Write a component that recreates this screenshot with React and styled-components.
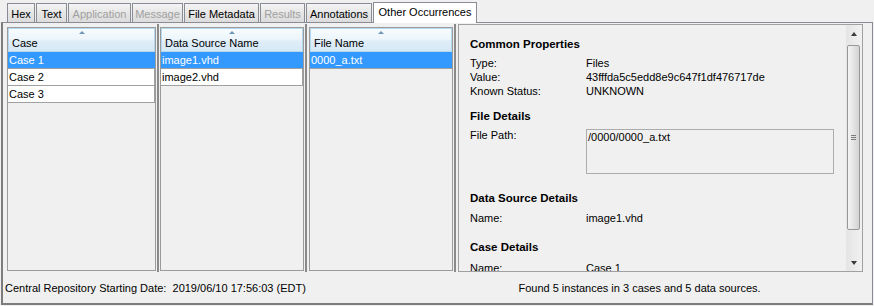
import styled, { createGlobalStyle } from "styled-components";

const GlobalStyle = createGlobalStyle`
  html, body {
    margin: 0;
    padding: 0;
    background: #f0f0f0;
  }
  body {
    font-family: "Liberation Sans", Arial, sans-serif;
    font-size: 11px;
    color: #000;
  }
`;

const Window = styled.div`
  width: 874px;
  height: 306px;
  overflow: hidden;
  background: #f0f0f0;
  display: flex;
  flex-direction: column;
`;

const TabStrip = styled.div`
  height: 22px;
  display: flex;
  align-items: flex-end;
  gap: 1px;
  padding-left: 7px;
  position: relative;
  z-index: 1;
`;

const Tab = styled.div`
  box-sizing: border-box;
  width: ${(p) => p.$w}px;
  height: ${(p) => (p.$active ? 21 : 19)}px;
  margin-bottom: ${(p) => (p.$active ? -1 : 0)}px;
  border: 1px solid #898c95;
  border-bottom: none;
  background: ${(p) =>
    p.$active ? "#ffffff" : "linear-gradient(#f4f4f4, #e6e6e6 50%, #dcdcdc)"};
  color: ${(p) => (p.$disabled ? "#a0a0a0" : "#000")};
  font-size: 11px;
  line-height: 14px;
  padding-top: ${(p) => (p.$active ? 2 : 3)}px;
  text-align: center;
  white-space: nowrap;
`;

const TabPanel = styled.div`
  box-sizing: border-box;
  margin-left: 1px;
  width: 872px;
  height: 283px;
  border: 1px solid #898c95;
  border-left: 2px solid #7d7d7d;
  border-bottom: 2px solid #7d7d7d;
  display: flex;
  flex-direction: column;
`;

const Split = styled.div`
  display: flex;
  align-items: flex-start;
  padding: 1px 9px 0 4px;
  height: 249px;
  box-sizing: border-box;
`;

const TablePane = styled.div`
  box-sizing: border-box;
  width: ${(p) => p.$w}px;
  height: 244px;
  margin-top: 3px;
  border: 1px solid #9b9b9b;
  background: #f0f0f0;
  display: flex;
  flex-direction: column;
  overflow: hidden;
`;

const Divider = styled.div`
  width: ${(p) => p.$w}px;
  height: 248px;
  flex-shrink: 0;
  background: linear-gradient(
    to right,
    transparent 1px,
    #8a8a8a 1px,
    #8a8a8a 3px,
    transparent 3px
  );
`;

const ColumnHeader = styled.div`
  box-sizing: border-box;
  height: 24px;
  border: 1px solid #b3d8ef;
  background: linear-gradient(#f6fbfe 0%, #eef6fc 45%, #dfedf8 55%, #d6e8f5 100%);
  display: flex;
  flex-direction: column;
  padding-top: 2px;
`;

const SortArrow = styled.div`
  align-self: center;
  width: 0;
  height: 0;
  border-left: 3px solid transparent;
  border-right: 3px solid transparent;
  border-bottom: 3px solid #6f97b8;
`;

const HeaderLabel = styled.div`
  line-height: 14px;
  margin-top: 2px;
  padding-left: 3px;
  white-space: nowrap;
`;

const TableRow = styled.div`
  box-sizing: border-box;
  height: 17px;
  line-height: 16px;
  padding-left: 1px;
  white-space: nowrap;
  border-bottom: 1px solid #a0a0a0;
  border-right: ${(p) => (p.$selected ? "none" : "1px solid #a0a0a0")};
  background: ${(p) => (p.$selected ? "#3399ff" : "#ffffff")};
  color: ${(p) => (p.$selected ? "#ffffff" : "#000")};
`;

const DetailPane = styled.div`
  box-sizing: border-box;
  width: 405px;
  height: 248px;
  border: 1px solid #a0a0a0;
  display: flex;
  overflow: hidden;
`;

const DetailContent = styled.div`
  flex: 1;
  overflow: hidden;
  padding: 12px 0 0 11px;
`;

const SectionTitle = styled.div`
  font-weight: bold;
  font-size: 11.5px;
  line-height: 14px;
  margin-top: ${(p) => p.$mt || 0}px;
  white-space: nowrap;
`;

const PropGrid = styled.div`
  display: grid;
  grid-template-columns: 116px 1fr;
  line-height: 14px;
  margin-top: ${(p) => p.$mt || 0}px;
  white-space: nowrap;
`;

const PathBox = styled.div`
  box-sizing: border-box;
  width: 248px;
  height: 45px;
  margin-top: 1px;
  border: 1px solid #acacac;
  line-height: 15px;
  padding-left: 1px;
`;

const ScrollBar = styled.div`
  width: 15px;
  margin-right: 1px;
  display: flex;
  flex-direction: column;
  background: linear-gradient(to right, #e4e4e4, #f0f0f0);
`;

const ScrollButton = styled.div`
  height: 17px;
  display: flex;
  align-items: center;
  justify-content: center;
`;

const Arrow = styled.div`
  width: 0;
  height: 0;
  border-left: 3px solid transparent;
  border-right: 3px solid transparent;
  ${(p) =>
    p.$down ? "border-top: 4px solid #3a3a3a;" : "border-bottom: 4px solid #3a3a3a;"}
`;

const Track = styled.div`
  flex: 1;
  padding: 3px 1px;
`;

const Thumb = styled.div`
  box-sizing: border-box;
  height: 185px;
  border: 1px solid #989898;
  border-radius: 2px;
  background: linear-gradient(to right, #f4f4f4, #e4e4e4 50%, #d2d2d2);
  display: flex;
  flex-direction: column;
  align-items: center;
  justify-content: center;
  gap: 1px;
`;

const GripLine = styled.div`
  width: 5px;
  height: 1px;
  background: #7c7c7c;
`;

const Status = styled.div`
  flex: 1;
  display: flex;
  align-items: center;
`;

const StatusLeft = styled.div`
  width: 404px;
  padding-left: 2px;
  box-sizing: border-box;
  white-space: pre;
`;

const StatusRight = styled.div`
  flex: 1;
  text-align: center;
  white-space: nowrap;
`;

const tabs = [
  { label: "Hex", w: 28 },
  { label: "Text", w: 31 },
  { label: "Application", w: 63, disabled: true },
  { label: "Message", w: 51, disabled: true },
  { label: "File Metadata", w: 75 },
  { label: "Results", w: 45, disabled: true },
  { label: "Annotations", w: 66 },
  { label: "Other Occurrences", w: 104, active: true },
];

function DataTable({ width, title, rows, selected }) {
  return (
    <TablePane $w={width}>
      <ColumnHeader>
        <SortArrow />
        <HeaderLabel>{title}</HeaderLabel>
      </ColumnHeader>
      {rows.map((r, i) => (
        <TableRow key={r} $selected={i === selected}>
          {r}
        </TableRow>
      ))}
    </TablePane>
  );
}

export default function App() {
  return (
    <Window>
      <GlobalStyle />
      <TabStrip>
        {tabs.map((t) => (
          <Tab key={t.label} $w={t.w} $active={t.active} $disabled={t.disabled}>
            {t.label}
          </Tab>
        ))}
      </TabStrip>
      <TabPanel>
        <Split>
          <DataTable width={149} title="Case" rows={["Case 1", "Case 2", "Case 3"]} selected={0} />
          <Divider $w={4} />
          <DataTable
            width={144}
            title="Data Source Name"
            rows={["image1.vhd", "image2.vhd"]}
            selected={0}
          />
          <Divider $w={5} />
          <DataTable width={144} title="File Name" rows={["0000_a.txt"]} selected={0} />
          <Divider $w={5} />
          <DetailPane>
            <DetailContent>
              <SectionTitle>Common Properties</SectionTitle>
              <PropGrid $mt={5}>
                <span>Type:</span>
                <span>Files</span>
                <span>Value:</span>
                <span>43fffda5c5edd8e9c647f1df476717de</span>
                <span>Known Status:</span>
                <span>UNKNOWN</span>
              </PropGrid>

              <SectionTitle $mt={11}>File Details</SectionTitle>
              <PropGrid $mt={5}>
                <span>File Path:</span>
                <PathBox>/0000/0000_a.txt</PathBox>
              </PropGrid>

              <SectionTitle $mt={17}>Data Source Details</SectionTitle>
              <PropGrid $mt={6}>
                <span>Name:</span>
                <span>image1.vhd</span>
              </PropGrid>

              <SectionTitle $mt={15}>Case Details</SectionTitle>
              <PropGrid $mt={7}>
                <span>Name:</span>
                <span>Case 1</span>
              </PropGrid>
            </DetailContent>
            <ScrollBar>
              <ScrollButton>
                <Arrow />
              </ScrollButton>
              <Track>
                <Thumb>
                  <GripLine />
                  <GripLine />
                  <GripLine />
                </Thumb>
              </Track>
              <ScrollButton>
                <Arrow $down />
              </ScrollButton>
            </ScrollBar>
          </DetailPane>
        </Split>
        <Status>
          <StatusLeft>Central Repository Starting Date:  2019/06/10 17:56:03 (EDT)</StatusLeft>
          <StatusRight>Found 5 instances in 3 cases and 5 data sources.</StatusRight>
        </Status>
      </TabPanel>
    </Window>
  );
}
